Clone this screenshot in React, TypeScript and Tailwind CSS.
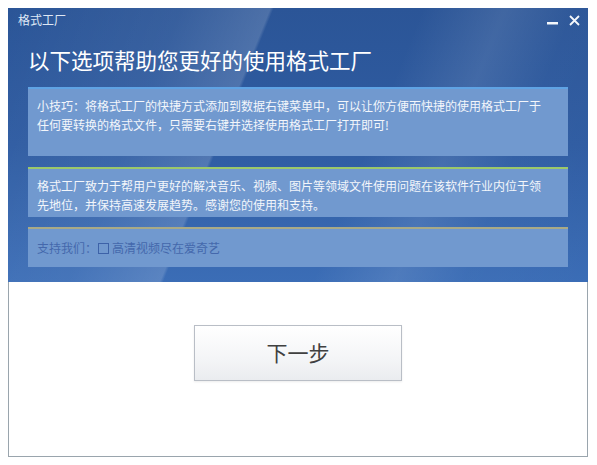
import React from "react";

const font = { fontFamily: '"Noto Sans CJK SC", "Noto Sans", sans-serif' };

export default function App() {
  return (
    <div className="w-[597px] h-[465px] bg-white pt-[8px] pl-[8px]" style={font}>
      <div className="w-[580px] h-[449px] flex flex-col">
        <div className="relative h-[274px] overflow-hidden bg-[linear-gradient(180deg,#2b5597_0%,#2f5ca2_50%,#3b6db6_100%)]">
          <div className="absolute inset-0 bg-[linear-gradient(112deg,rgba(255,255,255,0)_0%,rgba(255,255,255,0.06)_25%,rgba(255,255,255,0.16)_38%,rgba(255,255,255,0)_38.5%,rgba(255,255,255,0)_60%,rgba(255,255,255,0.1)_72%,rgba(255,255,255,0.02)_82%,rgba(255,255,255,0)_100%)]" />
          <div className="relative flex flex-col">
            <div className="h-[24px] flex items-center justify-between pl-[10px] pr-[8px]">
              <span className="text-[12px] text-[#dfe8f5] leading-none">格式工厂</span>
              <div className="flex items-center gap-[10px] text-white">
                <svg width="12" height="12" viewBox="0 0 12 12"><rect x="0" y="8" width="11" height="2.5" fill="#f4f7fb" /></svg>
                <svg width="11" height="11" viewBox="0 0 11 11"><path d="M1 1 L10 10 M10 1 L1 10" stroke="#f4f7fb" strokeWidth="1.8" /></svg>
              </div>
            </div>
            <div className="pl-[20px] h-[55px] flex items-center text-[21.5px] text-white leading-none">以下选项帮助您更好的使用格式工厂</div>
            <div className="mx-[20px] flex flex-col gap-[10px]">
              <div className="h-[69px] bg-[#7199cf] border-t-2 border-[#5fa3e4] px-[9px] pt-[7px] text-[12px] leading-[19px] text-[#f3f6fb]">
                小技巧：将格式工厂的快捷方式添加到数据右键菜单中，可以让你方便而快捷的使用格式工厂于<br />任何要转换的格式文件，只需要右键并选择使用格式工厂打开即可!
              </div>
              <div className="h-[50px] mt-[1px] bg-[#7199cf] border-t-2 border-[#9cc86a] px-[9px] pt-[7px] text-[12px] leading-[19px] text-[#f3f6fb]">
                格式工厂致力于帮用户更好的解决音乐、视频、图片等领域文件使用问题在该软件行业内位于领<br />先地位，并保持高速发展趋势。感谢您的使用和支持。
              </div>
              <div className="h-[40px] bg-[#7199cf] border-t-2 border-[#a9aa86] px-[9px] flex items-center text-[12px] text-[#4468ac]">
                <span>支持我们：</span>
                <span className="inline-block w-[11px] h-[11px] border border-[#3d62a8] mr-[3px] ml-[1px]" />
                <span>高清视频尽在爱奇艺</span>
              </div>
            </div>
          </div>
        </div>
        <div className="flex-1 border border-t-0 border-[#9aa5ad] bg-white flex justify-center pt-[43px]">
          <button className="w-[208px] h-[56px] border border-[#b9bec6] shadow-[0_1px_2px_rgba(0,0,0,0.08)] bg-[linear-gradient(180deg,#ffffff_0%,#f4f5f7_60%,#eaecef_100%)] text-[21px] text-[#404040] flex items-center justify-center" style={font}>
            下一步
          </button>
        </div>
      </div>
    </div>
  );
}
